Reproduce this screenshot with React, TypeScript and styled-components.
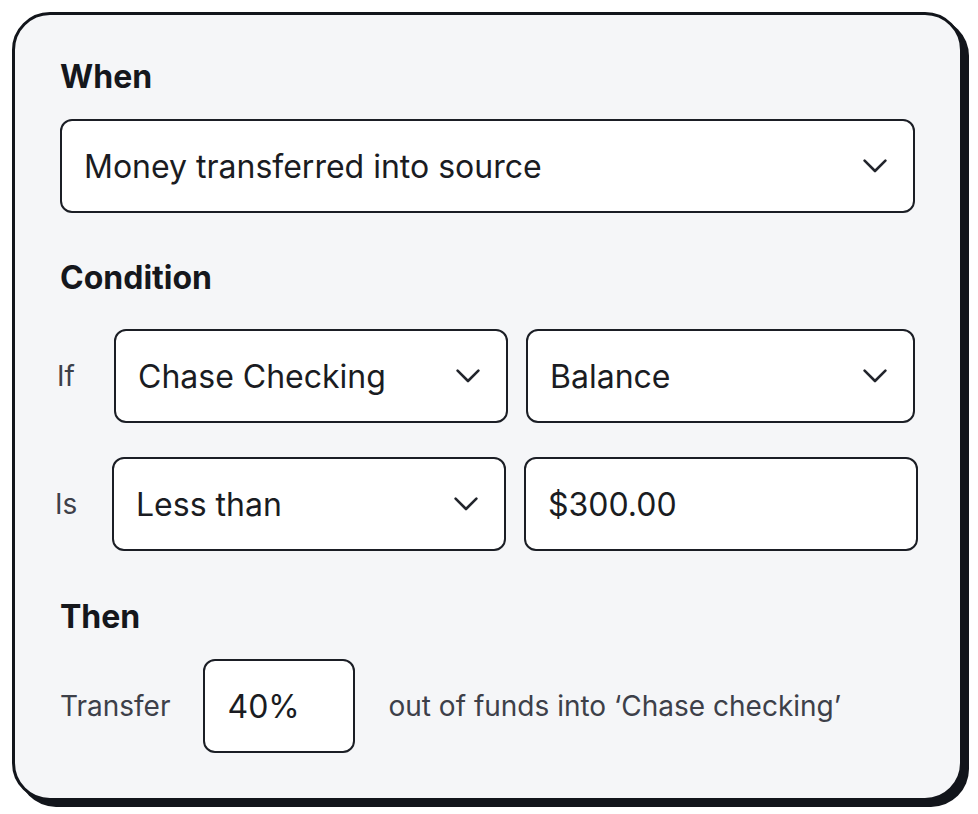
import React from "react";
import styled, { createGlobalStyle } from "styled-components";

const GlobalStyle = createGlobalStyle`
  html, body {
    margin: 0;
    padding: 0;
    background: #ffffff;
    font-family: Inter, "Noto Sans", "Liberation Sans", sans-serif;
    color: #181a20;
  }
`;

const Page = styled.div`
  width: 978px;
  height: 814px;
  padding: 12px;
  box-sizing: border-box;
`;

const Card = styled.div`
  width: 951px;
  height: 789px;
  box-sizing: border-box;
  border: 3px solid #12151b;
  border-radius: 38px;
  background: #f5f6f8;
  box-shadow: 6px 6px 0 #12151b;
  padding: 44px 45px 0 45px;
  display: flex;
  flex-direction: column;
`;

const Heading = styled.h2<{ $gap?: number }>`
  margin: ${(p) => p.$gap ?? 0}px 0 0 0;
  font-size: 32px;
  line-height: 36px;
  font-weight: 700;
  color: #15171c;
`;

const Box = styled.div<{ $mt?: number }>`
  height: 94px;
  box-sizing: border-box;
  margin-top: ${(p) => p.$mt ?? 0}px;
  border: 2px solid #1b1e25;
  border-radius: 12px;
  background: #ffffff;
  display: flex;
  align-items: center;
  justify-content: space-between;
  padding: 0 26px 0 22px;
  font-size: 32px;
  color: #1a1c22;
  min-width: 0;
  white-space: nowrap;
`;

// rows poke a little out of the card padding on both sides
const Row = styled.div<{ $mt: number; $left: number; $right: number; $cols: string }>`
  margin-top: ${(p) => p.$mt}px;
  margin-left: ${(p) => -p.$left}px;
  margin-right: ${(p) => -p.$right}px;
  display: grid;
  grid-template-columns: 51px ${(p) => p.$cols};
  column-gap: 18px;
  align-items: center;
`;

const RowLabel = styled.span`
  padding-left: 12px;
  font-size: 28px;
  color: #3d4049;
`;

const InlineRow = styled.div`
  margin-top: 24px;
  display: flex;
  align-items: center;
  gap: 33px;
`;

const InlineText = styled.span`
  font-size: 28px;
  color: #3d4049;
  white-space: nowrap;
`;

const PercentBox = styled(Box)`
  width: 152px;
`;

const Chevron = () => (
  <svg width="24" height="14" viewBox="0 0 24 14" fill="none">
    <polyline
      points="1.6,1.6 12,12 22.4,1.6"
      stroke="#22252c"
      strokeWidth="2.6"
      strokeLinecap="round"
      strokeLinejoin="round"
    />
  </svg>
);

const Select = ({ value, mt }: { value: string; mt?: number }) => (
  <Box $mt={mt}>
    <span>{value}</span>
    <Chevron />
  </Box>
);

export default function App() {
  return (
    <>
      <GlobalStyle />
      <Page>
        <Card>
          <Heading>When</Heading>
          <Select value="Money transferred into source" mt={24} />

          <Heading $gap={47}>Condition</Heading>
          <Row $mt={33} $left={15} $right={0} $cols="394fr 389fr">
            <RowLabel>If</RowLabel>
            <Select value="Chase Checking" />
            <Select value="Balance" />
          </Row>
          <Row $mt={34} $left={17} $right={3} $cols="1fr 1fr">
            <RowLabel>Is</RowLabel>
            <Select value="Less than" />
            <Box>$300.00</Box>
          </Row>

          <Heading $gap={48}>Then</Heading>
          <InlineRow>
            <InlineText>Transfer</InlineText>
            <PercentBox>40%</PercentBox>
            <InlineText>out of funds into ‘Chase checking’</InlineText>
          </InlineRow>
        </Card>
      </Page>
    </>
  );
}
